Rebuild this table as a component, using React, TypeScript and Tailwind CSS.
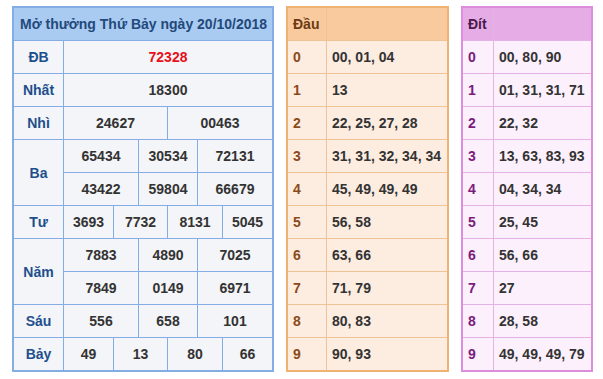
import { Fragment } from 'react';

const font = { fontFamily: '"Liberation Sans", Arial, sans-serif' };

const dau: [string, string][] = [
  ['0', '00, 01, 04'],
  ['1', '13'],
  ['2', '22, 25, 27, 28'],
  ['3', '31, 31, 32, 34, 34'],
  ['4', '45, 49, 49, 49'],
  ['5', '56, 58'],
  ['6', '63, 66'],
  ['7', '71, 79'],
  ['8', '80, 83'],
  ['9', '90, 93'],
];

const dit: [string, string][] = [
  ['0', '00, 80, 90'],
  ['1', '01, 31, 31, 71'],
  ['2', '22, 32'],
  ['3', '13, 63, 83, 93'],
  ['4', '04, 34, 34'],
  ['5', '25, 45'],
  ['6', '56, 66'],
  ['7', '27'],
  ['8', '28, 58'],
  ['9', '49, 49, 49, 79'],
];

function Label({ children, span2 }: { children: string; span2?: boolean }) {
  return (
    <div
      className={`bg-[#f3f5f8] text-[#1d4f8c] flex items-center justify-center ${span2 ? 'row-span-2' : ''}`}
    >
      {children}
    </div>
  );
}

function Val({ children, cls, red }: { children: string; cls: string; red?: boolean }) {
  return (
    <div
      className={`bg-[#f3f5f8] flex items-center justify-center ${cls} ${red ? 'text-[#e8101a]' : 'text-[#333]'}`}
    >
      {children}
    </div>
  );
}

function ResultTable() {
  return (
    <div className="w-[262px] border-2 border-[#84ade6] bg-[#84ade6]">
      <div className="grid grid-cols-[49px_49px_24px_28px_29px_24px_49px] grid-rows-[32px_repeat(10,32px)] gap-px">
        <div className="col-span-7 bg-[#a9cbf2] text-[#23497a] flex items-center pl-[6px]">
          Mở thưởng Thứ Bảy ngày 20/10/2018
        </div>

        <Label>ĐB</Label>
        <Val cls="col-span-6" red>72328</Val>

        <Label>Nhất</Label>
        <Val cls="col-span-6">18300</Val>

        <Label>Nhì</Label>
        <Val cls="col-span-3">24627</Val>
        <Val cls="col-span-3">00463</Val>

        <Label span2>Ba</Label>
        <Val cls="col-span-2">65434</Val>
        <Val cls="col-span-2">30534</Val>
        <Val cls="col-span-2">72131</Val>
        <Val cls="col-span-2">43422</Val>
        <Val cls="col-span-2">59804</Val>
        <Val cls="col-span-2">66679</Val>

        <Label>Tư</Label>
        <Val cls="">3693</Val>
        <Val cls="col-span-2">7732</Val>
        <Val cls="col-span-2">8131</Val>
        <Val cls="">5045</Val>

        <Label span2>Năm</Label>
        <Val cls="col-span-2">7883</Val>
        <Val cls="col-span-2">4890</Val>
        <Val cls="col-span-2">7025</Val>
        <Val cls="col-span-2">7849</Val>
        <Val cls="col-span-2">0149</Val>
        <Val cls="col-span-2">6971</Val>

        <Label>Sáu</Label>
        <Val cls="col-span-2">556</Val>
        <Val cls="col-span-2">658</Val>
        <Val cls="col-span-2">101</Val>

        <Label>Bảy</Label>
        <Val cls="">49</Val>
        <Val cls="col-span-2">13</Val>
        <Val cls="col-span-2">80</Val>
        <Val cls="">66</Val>
      </div>
    </div>
  );
}

function HeadDau() {
  return (
    <div className="w-[163px] border-2 border-[#f0b272] bg-[#f0c397]">
      <div className="grid grid-cols-[38px_1fr] grid-rows-[32px_repeat(10,32px)] gap-px">
        <div className="bg-[#f9ca9e] text-[#6b3a14] flex items-center pl-[5px]">Đầu</div>
        <div className="bg-[#f9ca9e]" />
        {dau.map(([k, v]) => (
          <Fragment key={k}>
            <div className="bg-[#fdece0] text-[#8b4a1a] flex items-center pl-[5px]">{k}</div>
            <div className="bg-[#fdece0] text-[#333] flex items-center pl-[5px]">{v}</div>
          </Fragment>
        ))}
      </div>
    </div>
  );
}

function TailDit() {
  return (
    <div className="w-[132px] border-2 border-[#dc8ddc] bg-[#e5b2e5]">
      <div className="grid grid-cols-[30px_1fr] grid-rows-[32px_repeat(10,32px)] gap-px">
        <div className="bg-[#e6ace6] text-[#4a1a4a] flex items-center pl-[5px]">Đít</div>
        <div className="bg-[#e6ace6]" />
        {dit.map(([k, v]) => (
          <Fragment key={k}>
            <div className="bg-[#fcf0fc] text-[#7b1b7b] flex items-center pl-[5px]">{k}</div>
            <div className="bg-[#fcf0fc] text-[#333] flex items-center pl-[5px]">{v}</div>
          </Fragment>
        ))}
      </div>
    </div>
  );
}

export default function App() {
  return (
    <div
      className="w-[603px] h-[379px] bg-white flex items-start gap-[12px] pl-[12px] pt-[6px] text-[14px] font-bold leading-none"
      style={font}
    >
      <ResultTable />
      <HeadDau />
      <TailDit />
    </div>
  );
}
